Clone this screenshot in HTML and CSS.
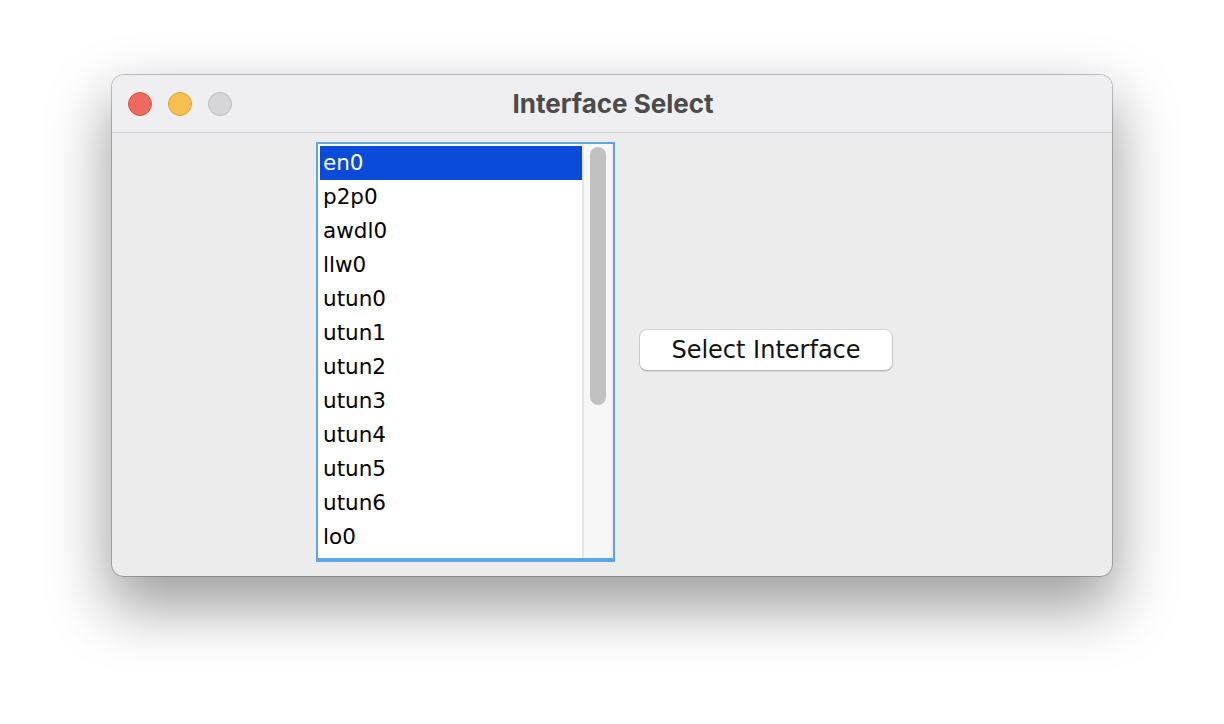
FILE: index.html
```html
<!DOCTYPE html>
<html>
<head>
<meta charset="utf-8">
<link rel="stylesheet" href="styles.css">
</head>
<body>
<div class="window">
  <div class="titlebar">
    <div class="lights">
      <span class="light red"></span>
      <span class="light yellow"></span>
      <span class="light grey"></span>
    </div>
    <div class="title">Interface Select</div>
  </div>
  <div class="content">
    <div class="listbox">
      <div class="items">
        <div class="item selected">en0</div>
        <div class="item">p2p0</div>
        <div class="item">awdl0</div>
        <div class="item">llw0</div>
        <div class="item">utun0</div>
        <div class="item">utun1</div>
        <div class="item">utun2</div>
        <div class="item">utun3</div>
        <div class="item">utun4</div>
        <div class="item">utun5</div>
        <div class="item">utun6</div>
        <div class="item">lo0</div>
      </div>
      <div class="track"><div class="thumb"></div></div>
    </div>
    <button class="btn">Select Interface</button>
  </div>
</div>
</body>
</html>
```

FILE: styles.css
```css
* { box-sizing: border-box; }
html, body { margin: 0; padding: 0; background: #ffffff; }
body {
  width: 1224px;
  height: 724px;
  overflow: hidden;
  padding: 75px 0 0 112px;
}
.window {
  width: 1000px;
  height: 501px;
  border-radius: 12px;
  background: #ececec;
  box-shadow: 0 0 0 1px rgba(0,0,0,0.22), 0 28px 60px 4px rgba(0,0,0,0.38);
  overflow: hidden;
  display: flex;
  flex-direction: column;
}
.titlebar {
  height: 58px;
  flex: none;
  background: #efeff1;
  border-bottom: 1px solid #d3d3d3;
  display: grid;
  grid-template-columns: 1fr;
  align-items: center;
}
.lights {
  grid-area: 1 / 1;
  display: flex;
  gap: 16px;
  padding-left: 16px;
  align-self: center;
}
.light {
  width: 24px;
  height: 24px;
  border-radius: 50%;
  display: block;
}
.red { background: #ee6a5e; border: 1px solid #d35449; }
.yellow { background: #f6bf4f; border: 1px solid #d9a33a; }
.grey { background: #d6d6d8; border: 1px solid #bdbdbf; }
.title {
  grid-area: 1 / 1;
  text-align: center;
  font-family: Inter, "Liberation Sans", sans-serif;
  font-weight: 700;
  font-size: 26px;
  color: #4b4b4b;
  padding-left: 2px;
  padding-bottom: 1px;
}
.content {
  flex: 1;
  display: flex;
  align-items: flex-start;
  padding: 9px 0 0 204px;
  gap: 25px;
}
.listbox {
  width: 299px;
  height: 420px;
  border: 2px solid #5aa6e8;
  border-bottom-width: 4px;
  background: #ffffff;
  display: flex;
  overflow: hidden;
}
.items {
  flex: 1;
  padding: 2px 0 0 2px;
  overflow: hidden;
  font-family: "DejaVu Sans", sans-serif;
  font-size: 21.5px;
  color: #000;
}
.item {
  height: 34px;
  line-height: 34px;
  padding-left: 3px;
}
.item.selected {
  background: #0a4bd9;
  color: #ffffff;
}
.track {
  width: 31px;
  flex: none;
  background: #f7f7f7;
  border-left: 2px solid #e6e6e6;
  border-right: 2px solid #ededed;
  padding: 3px 0 0 6px;
}
.thumb {
  width: 16px;
  height: 258px;
  border-radius: 8px;
  background: #c1c1c1;
}
.btn {
  margin-top: 188px;
  width: 252px;
  height: 40px;
  background: #ffffff;
  border: none;
  border-radius: 7px;
  box-shadow: 0 0 0 1px rgba(0,0,0,0.08), 0 1px 2px rgba(0,0,0,0.25);
  font-family: "DejaVu Sans", sans-serif;
  font-size: 24px;
  color: #111;
  padding: 0;
  line-height: 40px;
}
```
